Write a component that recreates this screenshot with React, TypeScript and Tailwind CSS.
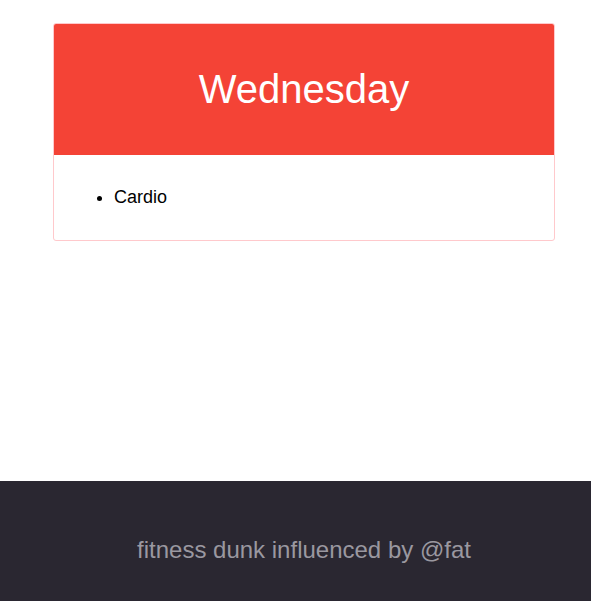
export default function App() {
  return (
    <div className="min-h-[601px] flex flex-col bg-white font-['Liberation_Sans',Arial,sans-serif]">
      <main className="flex-1 pt-[23px] pl-[53px]">
        <div className="w-[502px] rounded-[3px] border border-[#ffc9cc] overflow-hidden">
          <div className="h-[131px] bg-[#f44336] flex items-center justify-center">
            <h1 className="text-[40px] text-white leading-none pb-[2px]">Wednesday</h1>
          </div>
          <div className="h-[85px] pl-[60px] pt-[32px]">
            <ul className="list-disc text-[18px] text-black leading-[20px]">
              <li>Cardio</li>
            </ul>
          </div>
        </div>
      </main>
      <footer className="h-[120px] bg-[#2a2731] flex items-center justify-center pl-[17px] pt-[18px]">
        <p className="text-[24px] text-[#9a98a0]">fitness dunk influenced by @fat</p>
      </footer>
    </div>
  );
}
